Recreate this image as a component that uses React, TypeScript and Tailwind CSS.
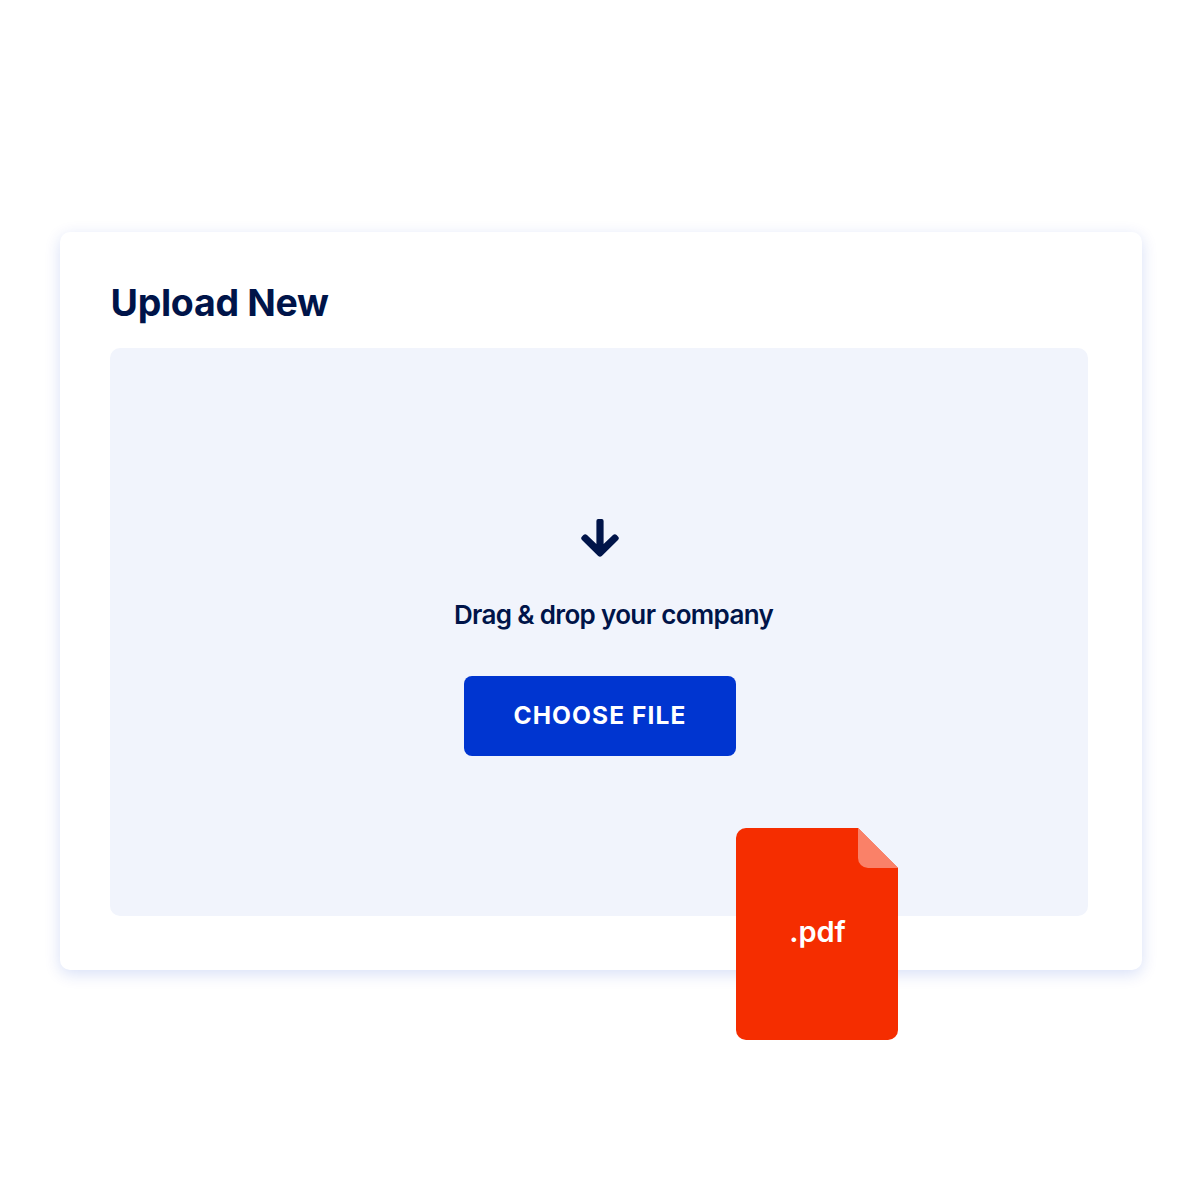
export default function App() {
  return (
    <main className="flex h-[1200px] w-[1200px] items-start bg-white pt-[232px] pl-[60px] font-['Inter',sans-serif] text-[#001449]">
      <section className="relative flex h-[738px] w-[1082px] flex-col rounded-[10px] bg-white pt-[50px] pl-[50px] shadow-[0_4px_16px_rgba(0,55,208,0.16)]">
        <h1 className="flex h-[42px] items-center pl-[0.5px] text-[37.5px] font-bold tracking-[-0.3px] whitespace-nowrap">Upload New</h1>
        <div className="mt-[24px] flex h-[568px] w-[978px] flex-col rounded-[10px] bg-[#f1f4fc] pt-[171px]">
          <svg className="ml-[471px]" width="38" height="38" viewBox="0 0 38 38" fill="#001449">
            <path d="M17.2 0H20.800Q22.600 0 22.600 2V25L32 16.100Q33.900 14.300 35.600 16.100L37.200 17.800Q38.600 19.400 37 21L20.800 36.900Q19 38.500 17.200 36.900L1 21Q-.6 19.400 .8 17.800L2.400 16.100Q4.100 14.300 6 16.100L15.400 25V2Q15.400 0 17.200 0Z" />
          </svg>
          <p className="mt-[41px] ml-[344px] flex h-[32px] items-center text-[26px] font-semibold tracking-[-0.66px] whitespace-nowrap">Drag &amp; drop your company</p>
          <button className="mt-[46px] ml-[354px] flex h-[80px] w-[272px] items-center justify-center rounded-[8px] bg-[#0035d0] pb-[2px] text-[24.5px] font-bold tracking-[1.1px] whitespace-nowrap text-white">CHOOSE FILE</button>
        </div>
        <div className="absolute top-[596px] left-[676px] flex h-[212px] w-[162px] items-center justify-center">
          <svg className="absolute inset-0" width="162" height="212" viewBox="0 0 162 212">
            <path d="M10 0H122L162 40V202A10 10 0 0 1 152 212H10A10 10 0 0 1 0 202V10A10 10 0 0 1 10 0Z" fill="#f52d00" />
            <path d="M122 0L162 40H132A10 10 0 0 1 122 30Z" fill="#fa8168" />
          </svg>
          <span className="relative -top-[2px] left-[0.5px] text-[29px] font-semibold text-white">.pdf</span>
        </div>
      </section>
    </main>
  );
}
